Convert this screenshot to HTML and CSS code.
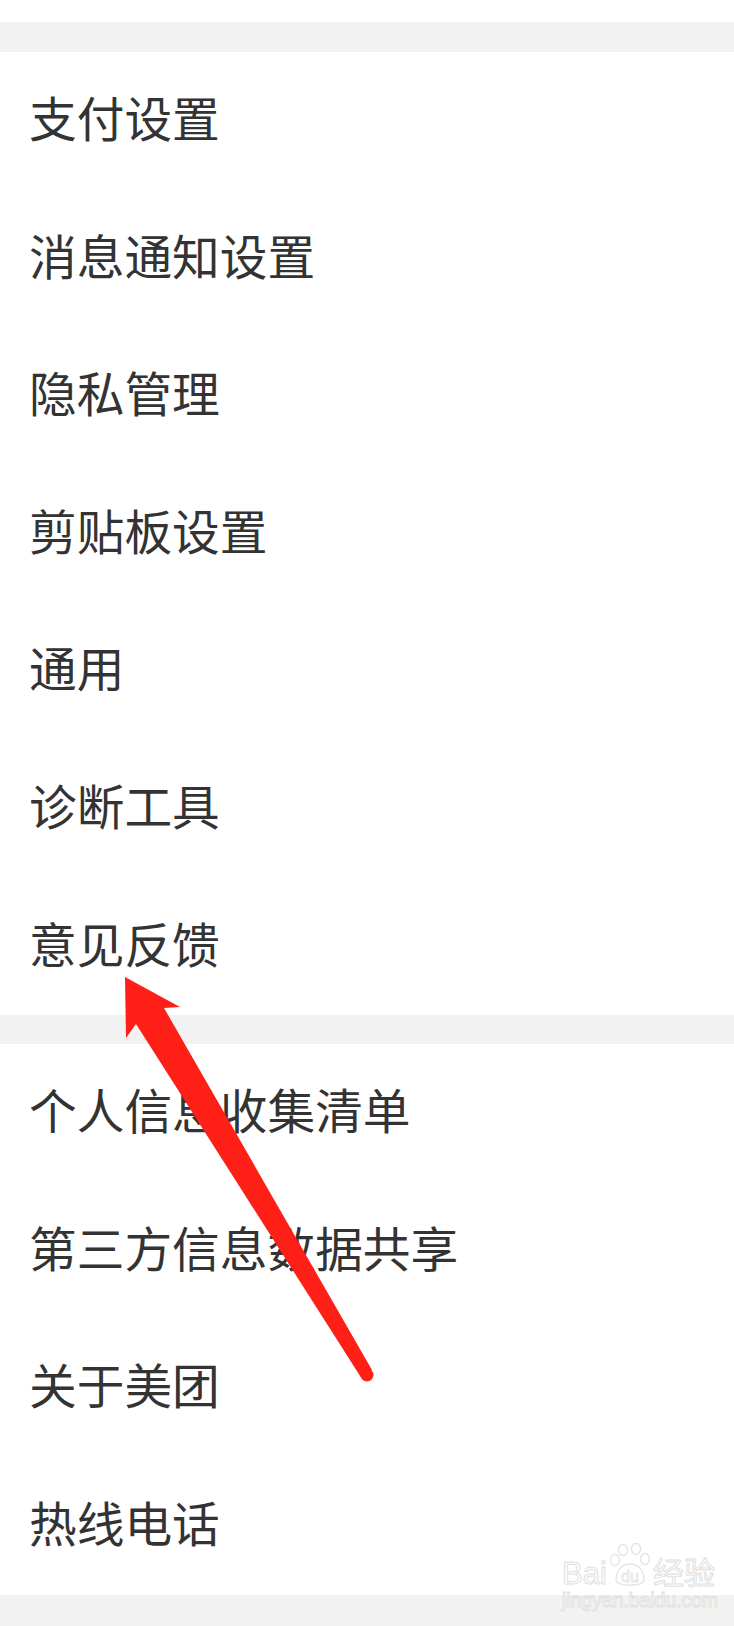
FILE: index.html
```html
<!DOCTYPE html>
<html lang="zh-CN">
<head>
    <meta charset="UTF-8">
    <meta name="viewport" content="width=device-width, initial-scale=1.0">
    <title>设置</title>
    <link rel="stylesheet" href="styles.css">
</head>
<body>
    <div class="top-space"></div>
    <div class="divider"></div>

    <!-- 设置项 -->
    <ul class="menu">
        <li>支付设置</li>
        <li>消息通知设置</li>
        <li>隐私管理</li>
        <li>剪贴板设置</li>
        <li>通用</li>
        <li>诊断工具</li>
        <li>意见反馈</li>
    </ul>

    <div class="divider divider-mid"></div>

    <!-- 关于 -->
    <ul class="menu">
        <li>个人信息收集清单</li>
        <li>第三方信息数据共享</li>
        <li>关于美团</li>
        <li>热线电话</li>
    </ul>

    <div class="bottom-space"></div>

    <!-- 红色箭头标注 -->
    <svg class="arrow" width="734" height="1626" viewBox="0 0 734 1626">
        <polygon fill="#fe1f17" points="125,977 180,1007 164,1008 372,1370 362,1379 136,1024 126,1038"/>
        <circle fill="#fe1f17" cx="367" cy="1375" r="6.5"/>
    </svg>

    <!-- 水印 -->
    <div class="watermark">
        <div class="wm-logo">
            <span>Bai</span>
            <span class="wm-paw">
                <svg width="44" height="46" viewBox="0 0 44 46">
                    <g fill="none" stroke="#e4e4e4" stroke-width="1.4">
                        <ellipse cx="15" cy="7" rx="4.5" ry="5.5"/>
                        <ellipse cx="28" cy="6" rx="4.5" ry="5.5"/>
                        <ellipse cx="7" cy="17" rx="4.5" ry="5.5"/>
                        <ellipse cx="37" cy="16" rx="4.5" ry="5.5"/>
                        <path d="M8 37 C8 26 15 21 22 21 C29 21 36 26 36 37 C36 44 8 44 8 37 Z"/>
                    </g>
                    <text x="22" y="39" text-anchor="middle" class="wm-du">du</text>
                </svg>
            </span>
            <span>经验</span>
        </div>
        <div class="wm-url">jingyan.baidu.com</div>
    </div>
</body>
</html>
```

FILE: styles.css
```css
body {
    margin: 0;
    background-color: #fff;
    font-family: "Noto Sans CJK SC", "Noto Sans", sans-serif;
    color: #333;
    position: relative;
    width: 734px;
    height: 1626px;
    overflow: hidden;
}
.top-space {
    height: 22px;
}
.divider {
    height: 30px;
    background-color: #f2f2f2;
}
.divider-mid {
    height: 29px;
}
.bottom-space {
    height: 40px;
    background-color: #f2f2f2;
}
.menu {
    list-style-type: none;
    margin: 0;
    padding: 0;
}
.menu li {
    height: 137.6px;
    box-sizing: border-box;
    display: flex;
    align-items: center;
    padding-left: 29px;
    padding-bottom: 8px;
    font-size: 47.7px;
    line-height: 1;
}
.arrow {
    position: absolute;
    left: 0;
    top: 0;
}
.watermark {
    position: absolute;
    left: 562px;
    top: 1541px;
    color: #fff;
    -webkit-text-stroke: 1px #e0e0e0;
    font-family: "Liberation Sans", sans-serif;
}
.wm-logo {
    display: flex;
    align-items: flex-end;
    font-size: 31px;
    line-height: 1;
    height: 46px;
}
.wm-logo > span {
    margin-bottom: -2px;
}
.wm-paw {
    display: inline-block;
    margin: 0 1px;
}
.wm-paw svg {
    display: block;
}
.wm-du {
    font-family: "Liberation Sans", sans-serif;
    font-size: 16px;
    fill: #fff;
    stroke: #e4e4e4;
    stroke-width: 0.8;
}
.wm-url {
    font-size: 20px;
    line-height: 1;
    margin-top: 3px;
    letter-spacing: -0.3px;
}
```
